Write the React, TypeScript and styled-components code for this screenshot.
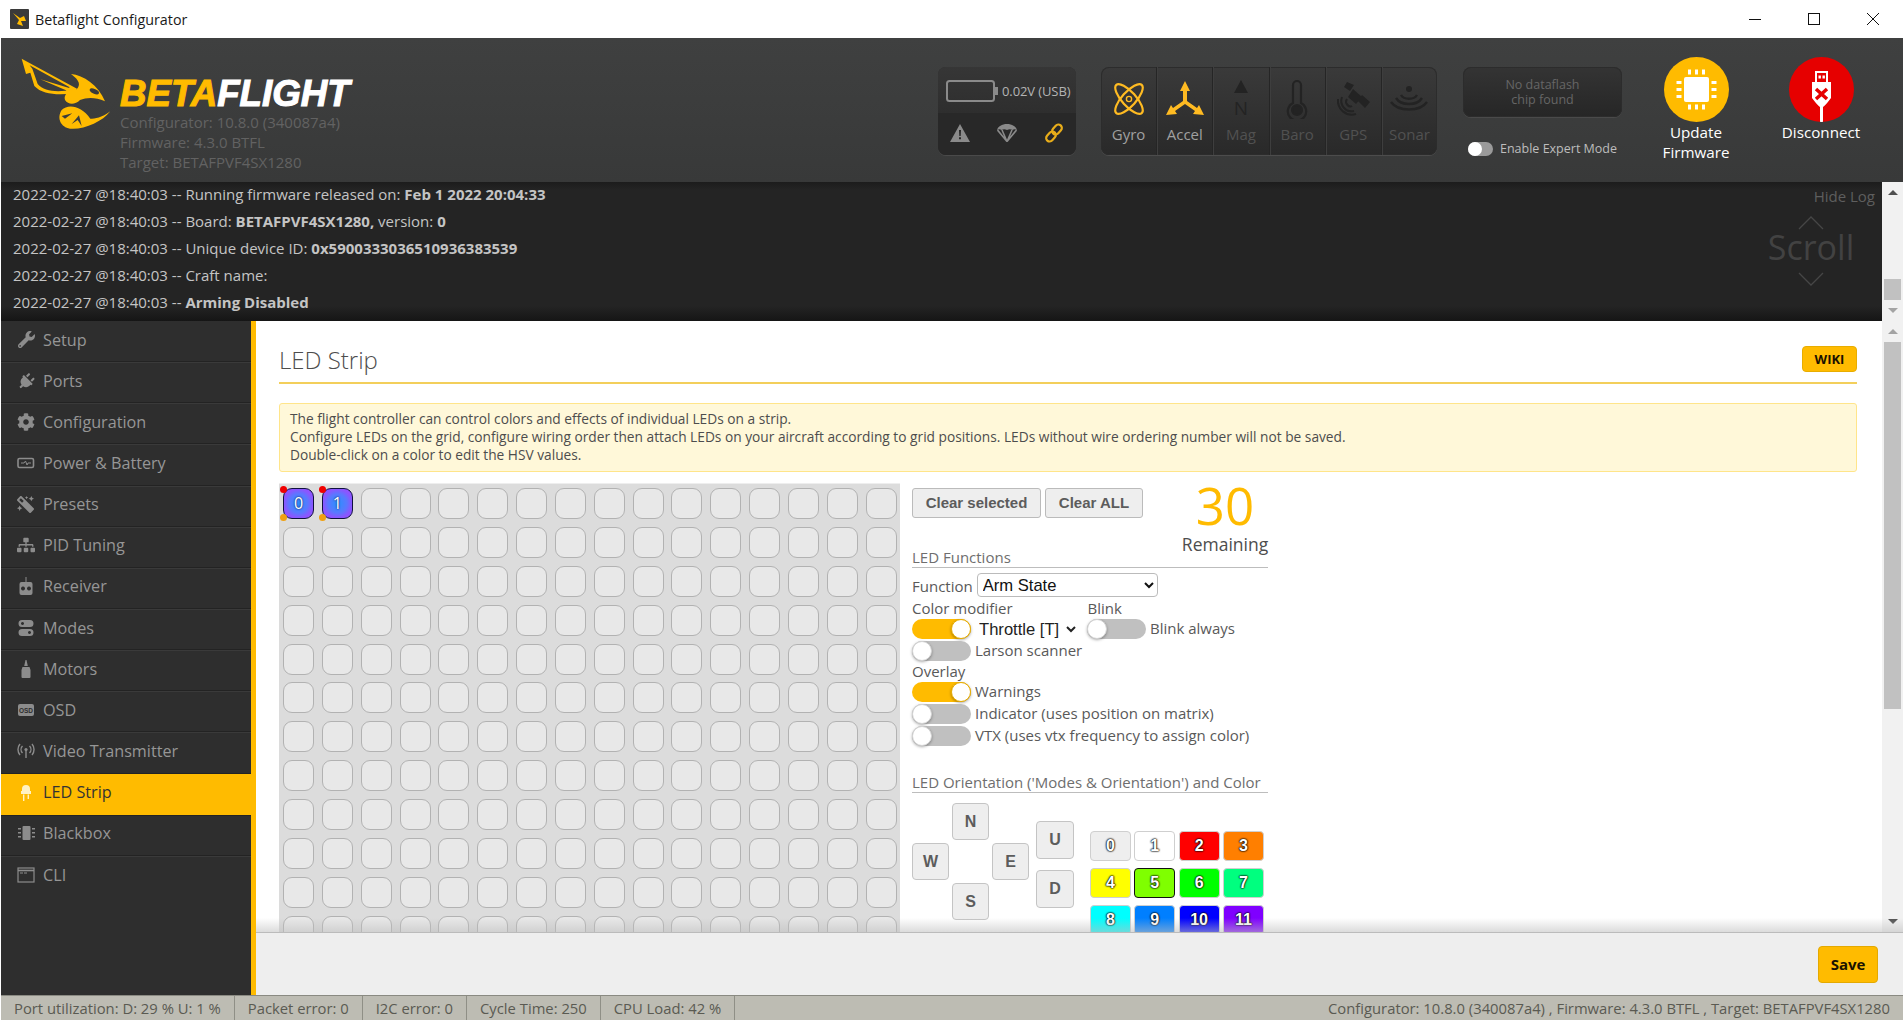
import React from "react";
import styled, { createGlobalStyle } from "styled-components";
import { FaWrench, FaPlug, FaCog, FaMagic, FaSitemap } from "react-icons/fa";

const Global = createGlobalStyle`
  html, body { margin: 0; padding: 0; background: #fff; overflow: hidden; }
  * { box-sizing: border-box; }
  body { font-family: "Open Sans", "Liberation Sans", sans-serif; }
`;

const Page = styled.div`
  width: 1903px; height: 1021px; display: flex; flex-direction: column;
  padding-bottom: 1px; background: #fff; overflow: hidden;
`;

/* ---------- window title bar ---------- */
const TitleBar = styled.div`
  height: 38px; display: flex; align-items: center; padding-left: 10px; background: #fff; flex: none;
`;
const AppIcon = styled.svg`width: 19px; height: 20px; margin-right: 6px; flex: none;`;
const AppTitle = styled.div`font-size: 14.3px; color: #1a1a1a; flex: 1; padding-top: 1px;`;
const WinButtons = styled.div`display: flex; align-items: center; padding-right: 24px; gap: 47px;`;
const WinIcon = styled.svg`width: 12px; height: 12px; display: block;`;

/* ---------- header ---------- */
const Header = styled.header`
  height: 144px; flex: none; margin-left: 1px; display: flex; position: relative;
  background: linear-gradient(#3f4040, #383939);
`;
const LogoArea = styled.div`display: flex; padding: 12px 0 0 14px; width: 937px; flex: none;`;
const Bee = styled.svg`width: 110px; height: 85px; flex: none; margin-right: -5px;`;
const Brand = styled.div`padding-top: 26px;`;
const BrandName = styled.div`
  font: italic 700 36.7px/36px "Liberation Sans", sans-serif; color: #fff; height: 36px;
  -webkit-text-stroke: 1.1px currentColor; white-space: nowrap;
`;
const BrandAccent = styled.span`color: #ffbb00;`;
const VersionLine = styled.div`font-size: 15px; line-height: 20px; color: #626262; white-space: nowrap;`;
const BatteryBox = styled.div`
  width: 138px; height: 88px; margin-top: 29px; border-radius: 8px; flex: none; overflow: hidden;
  background: #383838; box-shadow: 0 1px 0 #4a4a4a, inset 0 0 0 1px #2e2e2e; display: flex; flex-direction: column;
`;
const BatteryTop = styled.div`
  height: 46px; display: flex; align-items: center; padding: 2px 0 0 8px; gap: 2px;
  background: linear-gradient(#363636, #2e2e2e);
`;
const BatteryText = styled.span`font-size: 13px; letter-spacing: -0.1px; color: #b4b4b4; white-space: nowrap; margin-left: 2px;`;
const BatteryBottom = styled.div`
  flex: 1; display: flex; align-items: center; justify-content: space-between; padding: 0 12px 2px 12px; background: #282828;
`;
const Sensors = styled.div`
  width: 336px; height: 88px; margin: 29px 0 0 25px; border-radius: 8px; display: flex; overflow: hidden; flex: none;
  background: linear-gradient(#3a3a3a, #292929); box-shadow: 0 1px 0 #4c4c4c, inset 0 0 0 1px #2c2c2c;
`;
const SensorCell = styled.div<{ $on?: boolean }>`
  flex: 1; display: flex; flex-direction: column; align-items: center; padding-top: 12px;
  color: ${p => (p.$on ? "#ffbb22" : "#232323")};
  border-right: 1px solid #252525; box-shadow: 1px 0 0 #3e3e3e;
  &:last-child { border-right: none; box-shadow: none; }
`;
const SensorIcon = styled.svg`width: 38px; height: 40px; display: block; flex: none;`;
const SensorLabel = styled.span<{ $on?: boolean }>`
  font-size: 15px; line-height: 20px; margin-top: 5px;
  color: ${p => (p.$on ? "#a0a0a0" : "#515151")};
`;
const FlashColumn = styled.div`
  width: 159px; margin: 29px 0 0 26px; flex: none; display: flex; flex-direction: column;
`;
const FlashBox = styled.div`
  height: 50px; border-radius: 8px; background: linear-gradient(#343434, #262626);
  box-shadow: 0 1px 0 #4a4a4a, inset 0 0 0 1px #2c2c2c; color: #666; font-size: 12.5px; line-height: 15px;
  display: flex; align-items: center; justify-content: center; text-align: center;
`;
const ExpertRow = styled.div`display: flex; align-items: center; margin-top: 23px; padding-left: 5px; gap: 7px;`;
const MiniToggle = styled.div`
  width: 25px; height: 14px; border-radius: 7px; background: #9a9a9a; display: flex;
`;
const MiniKnob = styled.div`width: 14px; height: 14px; border-radius: 50%; background: #fff;`;
const ExpertText = styled.span`font-size: 12.5px; color: #bdbdbd; white-space: nowrap;`;
const ActionButton = styled.div`
  width: 110px; display: flex; flex-direction: column; align-items: center; padding-top: 19px; flex: none;
  color: #fff; font-size: 15.2px; line-height: 20px; text-align: center;
`;
const ActionCircle = styled.div<{ $bg: string }>`
  width: 65px; height: 65px; border-radius: 50%; background: ${p => p.$bg};
  display: flex; align-items: center; justify-content: center; overflow: hidden;
`;
const ActionIcon = styled.svg`width: 65px; height: 65px; display: block;`;
const UpdateAction = styled(ActionButton)`margin-left: 19px;`;
const DisconnectAction = styled(ActionButton)`margin-left: 15px;`;

/* ---------- log ---------- */
const LogRow = styled.div`height: 139px; flex: none; display: flex; margin-left: 1px;`;
const LogPanel = styled.div`
  flex: 1; position: relative; padding-left: 12px; color: #c4c4c4; font-size: 15px;
  background: linear-gradient(#1c1c1c 0, #242424 8px, #242424 124px, #151515 139px);
`;
const LogLine = styled.div`height: 27px; line-height: 24px; white-space: nowrap; b { font-weight: 700; }`;
const HideLog = styled.div`position: absolute; top: 4px; right: 7px; font-size: 15px; color: #5e5e5e;`;
const ScrollHint = styled.div`
  position: absolute; top: 34px; right: 29px; width: 84px; display: flex; flex-direction: column; align-items: center;
`;
const ScrollWord = styled.div`color: #424242; font-size: 34px; line-height: 34px; font-weight: 400; margin-bottom: 8px;`;
const ChevronSvg = styled.svg`width: 26px; height: 14px; display: block;`;

/* ---------- scrollbars ---------- */
const ScrollTrack = styled.div`
  width: 21px; flex: none; background: #f1f1f1; display: flex; flex-direction: column; align-items: center;
`;
const ScrollArrowBox = styled.div`height: 21px; flex: none; display: flex; align-items: center; justify-content: center;`;
const ArrowUp = styled.div<{ $c: string }>`
  width: 0; height: 0; border-left: 5px solid transparent; border-right: 5px solid transparent;
  border-bottom: 5px solid ${p => p.$c};
`;
const ArrowDown = styled.div<{ $c: string }>`
  width: 0; height: 0; border-left: 5px solid transparent; border-right: 5px solid transparent;
  border-top: 5px solid ${p => p.$c};
`;
const ThumbWell = styled.div<{ $top: number }>`flex: 1; width: 100%; padding: ${p => p.$top}px 2px 0;`;
const Thumb = styled.div<{ $h: number; $c: string }>`height: ${p => p.$h}px; background: ${p => p.$c};`;

/* ---------- main ---------- */
const Main = styled.div`flex: 1; display: flex; min-height: 0; margin-left: 1px;`;
const Sidebar = styled.nav`
  width: 255px; flex: none; background: #2e2e2e; border-right: 5px solid #ffbb00;
`;
const NavItem = styled.div<{ $active?: boolean }>`
  height: 41.15px; display: flex; align-items: center; padding: 0 0 3px 16px; gap: 8px; font-size: 16.2px;
  color: ${p => (p.$active ? "#333" : "#969696")};
  background: ${p => (p.$active ? "#ffbb00" : "transparent")};
  border-bottom: 1px solid ${p => (p.$active ? "#ffbb00" : "#232323")};
  box-shadow: 0 1px 0 ${p => (p.$active ? "#232323" : "#3a3a3a")};
  &:last-child { border-bottom: none; box-shadow: none; }
`;
const NavIcon = styled.span<{ $flip?: boolean; $rot?: number; $c?: string }>`
  width: 18px; height: 18px; display: flex; align-items: center; justify-content: center; flex: none;
  color: ${p => p.$c || "#8c8c8c"};
  transform: scaleX(${p => (p.$flip ? -1 : 1)}) rotate(${p => p.$rot || 0}deg);
  svg { display: block; }
`;

const ContentColumn = styled.div`flex: 1; min-width: 0; display: flex; flex-direction: column;`;
const ScrollRow = styled.div`flex: 1; min-height: 0; display: flex; position: relative;`;
const BottomFade = styled.div`
  position: absolute; left: 0; right: 0; bottom: 0; height: 14px; pointer-events: none;
  background: linear-gradient(rgba(200,200,200,0), rgba(190,190,190,.55));
`;
const ScrollArea = styled.div`flex: 1; min-width: 0; overflow: hidden; padding: 0 25px 0 23px;`;
const TitleRow = styled.div`
  height: 63px; display: flex; justify-content: space-between; border-bottom: 2px solid #f3cf5b; padding-top: 24px;
`;
const PageTitle = styled.h1`margin: 0; font-size: 24px; line-height: 30px; font-weight: 300; color: #4d4d4d;`;
const WikiButton = styled.div`
  width: 55px; height: 26px; border-radius: 4px; background: #ffbb00; border: 1px solid #e8ad00; color: #1a1000;
  font-size: 13px; font-weight: 700; display: flex; align-items: center; justify-content: center; margin-top: 1px;
`;
const Note = styled.div`
  margin-top: 19px; height: 69px; border: 1px solid #ffe58a; border-radius: 3px; background: #fff8d9;
  padding: 6px 10px; font-size: 13.72px; line-height: 18px; color: #4d4d4d; white-space: nowrap;
`;
const Workspace = styled.div`display: flex; margin-top: 11px; gap: 12px; align-items: flex-start;`;
const LedGrid = styled.div`
  width: 621px; flex: none; background: #dcdcdc; border-top: 1px solid #eee; padding: 4px 0 0 4px;
  display: grid; grid-template-columns: repeat(16, 31px); column-gap: 7.85px; row-gap: 7.9px;
`;
const LedCell = styled.div<{ $active?: boolean }>`
  width: 31px; height: 31px; border-radius: 9px; position: relative;
  border: 1px solid ${p => (p.$active ? "#101040" : "#b2b2b2")};
  background: ${p => (p.$active ? "radial-gradient(circle closest-side, #2a90ff 0, #5a78ff 65%, #8c55ff 100%)" : "#e8e8e8")};
  color: #fff; font-size: 16px; text-align: center; line-height: 28px; text-shadow: 0 0 2px #003;
`;
const LedDot = styled.span<{ $c: string; $bottom?: boolean }>`
  position: absolute; left: -4px; width: 7px; height: 7px; border-radius: 50%; background: ${p => p.$c};
  ${p => (p.$bottom ? "bottom: -3px;" : "top: -3px;")}
`;

const Controls = styled.div`width: 356px; flex: none; padding-top: 5px; color: #595959; font-size: 15px;`;
const TopRow = styled.div`height: 64px; display: flex; justify-content: space-between; align-items: flex-start;`;
const ButtonPair = styled.div`display: flex; gap: 4px;`;
const ClearButton = styled.div<{ $w: number }>`
  width: ${p => p.$w}px; height: 30px; border: 1px solid #bbb; border-radius: 3px; background: #eee;
  font: 700 15px/28px "Liberation Sans", sans-serif; color: #5c5c5c; text-align: center;
`;
const RemainingBox = styled.div`width: 86px; margin-top: -8px; display: flex; flex-direction: column; align-items: center;`;
const RemainingNum = styled.div`font-size: 51px; line-height: 50px; font-weight: 400; color: #ffbb00;`;
const RemainingText = styled.div`font-size: 17.5px; line-height: 22px; margin-top: 3px; color: #4d4d4d; white-space: nowrap;`;
const SectionTitle = styled.div<{ $mt?: number; $h: number; $lh: number }>`
  height: ${p => p.$h}px; margin-top: ${p => p.$mt || 0}px; border-bottom: 1px solid #bdbdbd; color: #6e6e6e;
  font-size: 15px; line-height: ${p => p.$lh}px; white-space: nowrap;
`;
const FunctionRow = styled.div`display: flex; align-items: center; gap: 4px; margin-top: 6px; height: 24px;`;
const FunctionLabel = styled.span`line-height: 20px;`;
const FunctionSelect = styled.select`
  width: 181px; height: 24px; border: 1px solid #bbb; border-radius: 4px; background: #fff; padding-left: 1px;
  margin-top: -2px; font: 16.6px "Liberation Sans", sans-serif; color: #111; outline: none;
`;
const ModifierSelect = styled.select`
  width: 104px; height: 20px; border: none; background: #fff; margin: 0 4px 0 0; padding: 0;
  font: 16.6px "Liberation Sans", sans-serif; color: #222; outline: none;
`;
const LabelRow = styled.div`display: flex; height: 18px; line-height: 16px; margin-top: 2px;`;
const BlinkLabel = styled.span`margin-left: 75px;`;
const SwitchRow = styled.div`display: flex; align-items: flex-start; height: 20px; margin-top: 2px; gap: 4px; line-height: 18px; white-space: nowrap;`;
const FirstSwitchRow = styled(SwitchRow)`margin-top: 1px;`;
const Switch = styled.div<{ $on?: boolean }>`
  width: 59px; height: 20px; border-radius: 10px; flex: none; display: flex;
  justify-content: ${p => (p.$on ? "flex-end" : "flex-start")};
  background: ${p => (p.$on ? "#ffbb00" : "#c0c0c0")};
`;
const Knob = styled.div<{ $on?: boolean }>`
  width: 20px; height: 20px; border-radius: 50%; background: #fff;
  border: 1px solid ${p => (p.$on ? "#e8ad00" : "#d4d4d4")};
  box-shadow: 0 1px 3px rgba(0,0,0,.35);
`;
const Orientation = styled.div`display: flex; align-items: flex-start; padding-top: 10px;`;
const DirPad = styled.div`
  display: grid; grid-template-columns: repeat(3, 37px); grid-template-rows: repeat(3, 37px); gap: 3px; flex: none;
`;
const DirButton = styled.div<{ $col?: number; $row?: number }>`
  grid-column: ${p => p.$col || "auto"}; grid-row: ${p => p.$row || "auto"};
  background: #eee; border: 1px solid #c4c4c4; border-radius: 4px; color: #5c5c5c;
  font: 700 16px "Liberation Sans", sans-serif; display: flex; align-items: center; justify-content: center;
`;
const UpDown = styled.div`
  display: flex; flex-direction: column; gap: 11px; margin: 18px 0 0 7px; flex: none;
`;
const UpDownButton = styled(DirButton)`width: 38px; height: 38px;`;
const Palette = styled.div`
  display: grid; grid-template-columns: repeat(4, 41px); grid-auto-rows: 29.5px; column-gap: 3.3px; row-gap: 7.5px;
  margin: 28px 0 0 16px; flex: none;
`;
const Swatch = styled.div<{ $bg: string; $sel?: boolean }>`
  background: ${p => p.$bg}; border: 1px solid ${p => (p.$sel ? "#111" : "#cfcfcf")}; border-radius: 4px;
  color: #fff; font: 700 16px "Liberation Sans", sans-serif; display: flex; align-items: center; justify-content: center;
  text-shadow: 0 0 2px #000, 0 0 2px #000, 0 0 1px #000;
`;

const Footer = styled.div`
  height: 63px; flex: none; background: #eee; border-top: 1px solid #bbb;
  display: flex; justify-content: flex-end; align-items: center; padding-right: 25px;
`;
const SaveButton = styled.div`
  width: 60px; height: 37px; border-radius: 4px; background: #ffbb00; border: 1px solid #e4a900;
  font-size: 15px; font-weight: 700; color: #1a1200; display: flex; align-items: center; justify-content: center;
`;

/* ---------- status bar ---------- */
const StatusBar = styled.footer`
  height: 25px; flex: none; margin-left: 1px; display: flex; align-items: center; background: #bdbcb3;
  border-top: 1px solid #8a8a82; color: #5a5a52; font-size: 14.8px; white-space: nowrap;
`;
const StatusItem = styled.div`height: 100%; display: flex; align-items: center; padding: 0 13px; border-right: 1px solid #8f8f86;`;
const StatusRight = styled.div`margin-left: auto; padding-right: 13px;`;

/* ---------- drawings ---------- */
const BeeMark = () => (
  <Bee viewBox="0 0 330 255" fill="#ffbb00">
    <path fillRule="evenodd" d="M20 26 L186 116 L176 130 C130 136 82 134 58 108 L46 68 L33 72 Z M44 46 L164 112 L152 122 C118 126 84 122 68 102 L52 56 Z" />
    <path d="M76 88 L170 116 L160 124 Z" />
    <path d="M168 72 C205 76 250 104 270 154 C240 140 215 142 195 150 C180 165 160 165 150 150 C145 135 160 120 185 118 C197 105 195 92 168 72Z" />
    <ellipse cx="238" cy="124" rx="15" ry="7" transform="rotate(25 238 124)" fill="#3a3b3b" />
    <path fillRule="evenodd" d="M286 184 C262 216 205 240 165 236 C138 232 124 205 140 180 C160 160 200 168 226 206 C244 208 268 198 286 184Z M140 198 L172 190 L150 206 Z M170 222 L192 196 L200 228 L188 210 Z" />
  </Bee>
);

const Chevron = ({ up }: { up?: boolean }) => (
  <ChevronSvg viewBox="0 0 26 14" fill="none" stroke="#464646" strokeWidth="1.3">
    <path d={up ? "M1 13 L13 1 L25 13" : "M1 1 L13 13 L25 1"} />
  </ChevronSvg>
);

const GyroIcon = () => (
  <SensorIcon viewBox="0 0 38 40" fill="none" stroke="currentColor" strokeWidth="2.2">
    <ellipse cx="19" cy="20" rx="7" ry="19" transform="rotate(-42 19 20)" />
    <ellipse cx="19" cy="20" rx="7" ry="19" transform="rotate(42 19 20)" />
    <circle cx="19" cy="20" r="2.6" strokeWidth="1.4" />
  </SensorIcon>
);
const AccelIcon = () => (
  <SensorIcon viewBox="0 0 38 40" fill="currentColor">
    <path d="M19 2 L24 12 L21 12 L21 22 L31 29 L33 26 L38 36 L27 35 L29 32 L19 25 L9 32 L11 35 L0 36 L5 26 L7 29 L17 22 L17 12 L14 12 Z" />
  </SensorIcon>
);
const MagIcon = () => (
  <SensorIcon viewBox="0 0 38 40" fill="currentColor">
    <path d="M19 1 L26 14 L12 14 Z" />
    <text x="19" y="36" textAnchor="middle" fontFamily="Open Sans" fontSize="19">N</text>
  </SensorIcon>
);
const BaroIcon = () => (
  <SensorIcon viewBox="0 0 38 40" fill="none" stroke="currentColor" strokeWidth="2.2">
    <path d="M15 24 V6 a4 4 0 0 1 8 0 V24 a9.2 9.2 0 1 1 -8 0Z" />
    <circle cx="19" cy="31" r="5" fill="currentColor" />
  </SensorIcon>
);
const GpsIcon = () => (
  <SensorIcon viewBox="0 0 38 40" fill="currentColor">
    <path d="M13 3 L20 6 L16 12 L10 8Z M28 16 L36 23 L31 29 L24 22Z M19 10 L28 18 L22 25 L14 18Z" />
    <path d="M8 18 C5 26 12 34 20 32 M4 20 C3 30 12 38 22 35 M13 20 C10 24 15 29 18 27" fill="none" stroke="currentColor" strokeWidth="2" />
  </SensorIcon>
);
const SonarIcon = () => (
  <SensorIcon viewBox="0 0 38 40" fill="none" stroke="currentColor" strokeWidth="2.4">
    <circle cx="19" cy="10" r="3" fill="currentColor" stroke="none" />
    <path d="M11 16 C14 21 24 21 27 16 M6 19 C11 27 27 27 32 19 M1 23 C8 33 30 33 37 23" />
  </SensorIcon>
);

const NavSvg = styled.svg`width: 18px; height: 18px;`;
const PowerIcon = () => (
  <NavSvg viewBox="0 0 18 18" fill="none" stroke="currentColor" strokeWidth="1.6">
    <rect x="1" y="4.5" width="15.5" height="9" rx="1.5" />
    <path d="M4 9 H7 L8.5 7 L10 11 L11 9 H14" strokeWidth="1" />
  </NavSvg>
);
const ReceiverIcon = () => (
  <NavSvg viewBox="0 0 18 18" fill="currentColor">
    <path fillRule="evenodd" d="M8.5 0 h1 v5 h4 a2 2 0 0 1 2 2 v9 a2 2 0 0 1 -2 2 h-9 a2 2 0 0 1 -2 -2 v-9 a2 2 0 0 1 2 -2 h4Z M6 9.5 a2 2 0 1 0 .01 0Z M12 9.5 a2 2 0 1 0 .01 0Z" />
  </NavSvg>
);
const ModesIcon = () => (
  <NavSvg viewBox="0 0 18 18" fill="currentColor">
    <path fillRule="evenodd" d="M5 1 h8 a3.5 3.5 0 0 1 0 7 h-8 a3.5 3.5 0 0 1 0 -7Z M5.5 3 a1.5 1.5 0 1 0 .01 0Z" />
    <path fillRule="evenodd" d="M5 10 h8 a3.5 3.5 0 0 1 0 7 h-8 a3.5 3.5 0 0 1 0 -7Z M12.5 12 a1.5 1.5 0 1 0 .01 0Z" />
  </NavSvg>
);
const MotorIcon = () => (
  <NavSvg viewBox="0 0 18 18" fill="currentColor">
    <path d="M8.5 0 h1 l1.3 6 h-3.6Z M5.5 7 h7 l1 3 v7 a1 1 0 0 1 -1 1 h-7 a1 1 0 0 1 -1 -1 v-7Z" />
  </NavSvg>
);
const OsdIcon = () => (
  <NavSvg viewBox="0 0 18 18">
    <rect x="1" y="3" width="16" height="12" rx="2" fill="currentColor" />
    <text x="9" y="11.6" textAnchor="middle" fontFamily="Liberation Sans" fontWeight="700" fontSize="6.5" fill="#2e2e2e">OSD</text>
  </NavSvg>
);
const VtxIcon = () => (
  <NavSvg viewBox="0 0 18 18" fill="none" stroke="currentColor" strokeWidth="1.4">
    <circle cx="9" cy="7.5" r="1.6" fill="currentColor" stroke="none" />
    <path d="M9 8 V16 M5.5 4 a5 5 0 0 0 0 7 M12.5 4 a5 5 0 0 1 0 7 M3 2 a8.5 8.5 0 0 0 0 11 M15 2 a8.5 8.5 0 0 1 0 11" />
  </NavSvg>
);
const LedIcon = () => (
  <NavSvg viewBox="0 0 18 18" fill="#fff2c4">
    <path d="M5 8 V6 a4 4 0 0 1 8 0 V8 h1 v3 H4 V8Z M6 11.5 h1.4 V18 H6Z M10.6 11.5 H12 V16 h-1.4Z" />
  </NavSvg>
);
const BlackboxIcon = () => (
  <NavSvg viewBox="0 0 18 18" fill="currentColor">
    <rect x="5.5" y="2" width="8" height="14" rx="1" />
    <path d="M1 4h3v1.6H1Z M1 8h3v1.6H1Z M1 12h3v1.6H1Z M15 4h3v1.6h-3Z M15 8h3v1.6h-3Z M15 12h3v1.6h-3Z" />
  </NavSvg>
);
const CliIcon = () => (
  <NavSvg viewBox="0 0 18 18" fill="none" stroke="currentColor" strokeWidth="1.2">
    <rect x="1" y="2" width="16" height="14" />
    <path d="M1 4.5 H17" strokeWidth="1.6" />
    <path d="M3 7 h3 M7 7 h3" strokeWidth="1" />
  </NavSvg>
);

const NAV: { label: string; icon: React.ReactNode; flip?: boolean; rot?: number; active?: boolean }[] = [
  { label: "Setup", icon: <FaWrench size={17} /> },
  { label: "Ports", icon: <FaPlug size={17} />, rot: 45 },
  { label: "Configuration", icon: <FaCog size={18} /> },
  { label: "Power & Battery", icon: <PowerIcon /> },
  { label: "Presets", icon: <FaMagic size={17} />, flip: true },
  { label: "PID Tuning", icon: <FaSitemap size={18} /> },
  { label: "Receiver", icon: <ReceiverIcon /> },
  { label: "Modes", icon: <ModesIcon /> },
  { label: "Motors", icon: <MotorIcon /> },
  { label: "OSD", icon: <OsdIcon /> },
  { label: "Video Transmitter", icon: <VtxIcon /> },
  { label: "LED Strip", icon: <LedIcon />, active: true },
  { label: "Blackbox", icon: <BlackboxIcon /> },
  { label: "CLI", icon: <CliIcon /> },
];

const SWATCHES = ["#eeeeee", "#ffffff", "#ff0000", "#ff7f00", "#ffff00", "#7fff00", "#00ff00", "#00ff7f", "#00ffff", "#007fff", "#0000ff", "#7f00ff", "#ff00ff", "#ff007f", "#ff0000", "#ffffff"];

const LOG: React.ReactNode[] = [
  <>Running firmware released on: <b>Feb 1 2022 20:04:33</b></>,
  <>Board: <b>BETAFPVF4SX1280,</b> version: <b>0</b></>,
  <>Unique device ID: <b>0x5900333036510936383539</b></>,
  <>Craft name:</>,
  <><b>Arming Disabled</b></>,
];

export default function App() {
  return (
    <Page>
      <Global />
      <TitleBar>
        <AppIcon viewBox="0 0 19 20">
          <rect width="19" height="20" rx="1" fill="#3a3a3a" />
          <path d="M3 4 L10 9 L14 7 L16 12 L11 12 L13 17 L7 15 L9 11Z" fill="#ffbb00" />
        </AppIcon>
        <AppTitle>Betaflight Configurator</AppTitle>
        <WinButtons>
          <WinIcon viewBox="0 0 12 12" stroke="#111" fill="none"><path d="M0 6.5 H12" /></WinIcon>
          <WinIcon viewBox="0 0 12 12" stroke="#111" fill="none"><rect x=".5" y=".5" width="11" height="11" /></WinIcon>
          <WinIcon viewBox="0 0 12 12" stroke="#111" fill="none"><path d="M0 0 L12 12 M12 0 L0 12" /></WinIcon>
        </WinButtons>
      </TitleBar>

      <Header>
        <LogoArea>
          <BeeMark />
          <Brand>
            <BrandName><BrandAccent>BETA</BrandAccent>FLIGHT</BrandName>
            <VersionLine>Configurator: 10.8.0 (340087a4)</VersionLine>
            <VersionLine>Firmware: 4.3.0 BTFL</VersionLine>
            <VersionLine>Target: BETAFPVF4SX1280</VersionLine>
          </Brand>
        </LogoArea>
        <BatteryBox>
          <BatteryTop>
            <svg width="52" height="22" viewBox="0 0 52 22" fill="none">
              <rect x="1" y="1" width="47" height="20" rx="2.5" stroke="#8a8a8a" strokeWidth="2" />
              <rect x="49" y="7" width="3" height="8" fill="#8a8a8a" />
            </svg>
            <BatteryText>0.02V (USB)</BatteryText>
          </BatteryTop>
          <BatteryBottom>
            <svg width="20" height="18" viewBox="0 0 20 18"><path fillRule="evenodd" fill="#8a8a8a" d="M10 0 L20 18 H0Z M9 6 h2 l-.3 6 h-1.4Z M9 13.2 h2 v2 h-2Z" /></svg>
            <svg width="20" height="18" viewBox="0 0 20 18" fill="none" stroke="#8a8a8a"><path fill="#8a8a8a" stroke="none" d="M10 0 C15 0 19 2.5 20 6 C18 5 17 5 15.5 6 C13.5 5 12 5 10 6 C8 5 6.5 5 4.5 6 C3 5 2 5 0 6 C1 2.5 5 0 10 0Z" /><path d="M0.5 6 L10 17.5 L19.5 6 M5 6 L10 17.5 L15 6" strokeWidth="1.6" /></svg>
            <svg width="20" height="20" viewBox="0 0 20 20" fill="none" stroke="#e8ad1a" strokeWidth="2.2">
              <rect x="9.5" y="1" width="7" height="11" rx="3.5" transform="rotate(42 13 6.5)" />
              <rect x="3.5" y="8" width="7" height="11" rx="3.5" transform="rotate(42 7 13.5)" />
            </svg>
          </BatteryBottom>
        </BatteryBox>
        <Sensors>
          <SensorCell $on><GyroIcon /><SensorLabel $on>Gyro</SensorLabel></SensorCell>
          <SensorCell $on><AccelIcon /><SensorLabel $on>Accel</SensorLabel></SensorCell>
          <SensorCell><MagIcon /><SensorLabel>Mag</SensorLabel></SensorCell>
          <SensorCell><BaroIcon /><SensorLabel>Baro</SensorLabel></SensorCell>
          <SensorCell><GpsIcon /><SensorLabel>GPS</SensorLabel></SensorCell>
          <SensorCell><SonarIcon /><SensorLabel>Sonar</SensorLabel></SensorCell>
        </Sensors>
        <FlashColumn>
          <FlashBox>No dataflash<br />chip found</FlashBox>
          <ExpertRow>
            <MiniToggle><MiniKnob /></MiniToggle>
            <ExpertText>Enable Expert Mode</ExpertText>
          </ExpertRow>
        </FlashColumn>
        <UpdateAction>
          <ActionCircle $bg="#ffbb00">
            <ActionIcon viewBox="0 0 65 65" fill="#fff">
              <rect x="20" y="20" width="25" height="25" rx="2" />
              <path d="M24 12.5 h3 v5 h-3Z M31 12.5 h3 v5 h-3Z M38 12.5 h3 v5 h-3Z M24 47.5 h3 v5 h-3Z M31 47.5 h3 v5 h-3Z M38 47.5 h3 v5 h-3Z M12.5 24 h5 v3 h-5Z M12.5 31 h5 v3 h-5Z M12.5 38 h5 v3 h-5Z M47.5 24 h5 v3 h-5Z M47.5 31 h5 v3 h-5Z M47.5 38 h5 v3 h-5Z" />
            </ActionIcon>
          </ActionCircle>
          Update<br />Firmware
        </UpdateAction>
        <DisconnectAction>
          <ActionCircle $bg="#e60000">
            <ActionIcon viewBox="0 0 65 65">
              <path fill="#fff" d="M26 14 h13 v11 h3 v16 q-6 8 -8 9 V65 h-3 V50 q-2 -1 -8 -9 V25 h3Z" />
              <path fill="#e60000" d="M28 16 h9 v9 h-9Z" />
              <path fill="#fff" d="M29.5 18.5 h2.4 v3 h-2.4Z M33.5 18.5 h2.4 v3 h-2.4Z" />
              <path stroke="#e60000" strokeWidth="3.5" d="M27 32 L38 42 M38 32 L27 42" />
            </ActionIcon>
          </ActionCircle>
          Disconnect
        </DisconnectAction>
      </Header>

      <LogRow>
        <LogPanel>
          {LOG.map((l, i) => (
            <LogLine key={i}>2022-02-27 @18:40:03 -- {l}</LogLine>
          ))}
          <HideLog>Hide Log</HideLog>
          <ScrollHint>
            <Chevron up />
            <ScrollWord>Scroll</ScrollWord>
            <Chevron />
          </ScrollHint>
        </LogPanel>
        <ScrollTrack>
          <ScrollArrowBox><ArrowUp $c="#505050" /></ScrollArrowBox>
          <ThumbWell $top={76}><Thumb $h={21} $c="#c1c1c1" /></ThumbWell>
          <ScrollArrowBox><ArrowDown $c="#a3a3a3" /></ScrollArrowBox>
        </ScrollTrack>
      </LogRow>

      <Main>
        <Sidebar>
          {NAV.map(n => (
            <NavItem key={n.label} $active={n.active}>
              <NavIcon $flip={n.flip} $rot={n.rot}>{n.icon}</NavIcon>
              {n.label}
            </NavItem>
          ))}
        </Sidebar>
        <ContentColumn>
          <ScrollRow>
            <ScrollArea>
              <TitleRow>
                <PageTitle>LED Strip</PageTitle>
                <WikiButton>WIKI</WikiButton>
              </TitleRow>
              <Note>
                The flight controller can control colors and effects of individual LEDs on a strip.<br />
                Configure LEDs on the grid, configure wiring order then attach LEDs on your aircraft according to grid positions. LEDs without wire ordering number will not be saved.<br />
                Double-click on a color to edit the HSV values.
              </Note>
              <Workspace>
                <LedGrid>
                  {Array.from({ length: 16 * 16 }, (_, i) =>
                    i < 2 ? (
                      <LedCell key={i} $active>
                        {i}
                        <LedDot $c="#f00000" />
                        <LedDot $c="#f0a010" $bottom />
                      </LedCell>
                    ) : (
                      <LedCell key={i} />
                    )
                  )}
                </LedGrid>
                <Controls>
                  <TopRow>
                    <ButtonPair>
                      <ClearButton $w={129}>Clear selected</ClearButton>
                      <ClearButton $w={98}>Clear ALL</ClearButton>
                    </ButtonPair>
                    <RemainingBox>
                      <RemainingNum>30</RemainingNum>
                      <RemainingText>Remaining</RemainingText>
                    </RemainingBox>
                  </TopRow>
                  <SectionTitle $h={16} $lh={10}>LED Functions</SectionTitle>
                  <FunctionRow>
                    <FunctionLabel>Function</FunctionLabel>
                    <FunctionSelect defaultValue="Arm State"><option>Arm State</option></FunctionSelect>
                  </FunctionRow>
                  <LabelRow>Color modifier<BlinkLabel>Blink</BlinkLabel></LabelRow>
                  <FirstSwitchRow>
                    <Switch $on><Knob $on /></Switch>
                    <ModifierSelect defaultValue="Throttle [T]"><option>Throttle [T]</option></ModifierSelect>
                    <Switch><Knob /></Switch>
                    Blink always
                  </FirstSwitchRow>
                  <SwitchRow><Switch><Knob /></Switch>Larson scanner</SwitchRow>
                  <LabelRow>Overlay</LabelRow>
                  <FirstSwitchRow><Switch $on><Knob $on /></Switch>Warnings</FirstSwitchRow>
                  <SwitchRow><Switch><Knob /></Switch>Indicator (uses position on matrix)</SwitchRow>
                  <SwitchRow><Switch><Knob /></Switch>VTX (uses vtx frequency to assign color)</SwitchRow>
                  <SectionTitle $h={22} $lh={22} $mt={25}>LED Orientation ('Modes &amp; Orientation') and Color</SectionTitle>
                  <Orientation>
                    <DirPad>
                      <DirButton $col={2} $row={1}>N</DirButton>
                      <DirButton $col={1} $row={2}>W</DirButton>
                      <DirButton $col={3} $row={2}>E</DirButton>
                      <DirButton $col={2} $row={3}>S</DirButton>
                    </DirPad>
                    <UpDown>
                      <UpDownButton>U</UpDownButton>
                      <UpDownButton>D</UpDownButton>
                    </UpDown>
                    <Palette>
                      {SWATCHES.map((c, i) => (
                        <Swatch key={i} $bg={c} $sel={i === 5}>{i}</Swatch>
                      ))}
                    </Palette>
                  </Orientation>
                </Controls>
              </Workspace>
            </ScrollArea>
            <ScrollTrack>
              <ScrollArrowBox><ArrowUp $c="#a3a3a3" /></ScrollArrowBox>
              <ThumbWell $top={0}><Thumb $h={367} $c="#c1c1c1" /></ThumbWell>
              <ScrollArrowBox><ArrowDown $c="#505050" /></ScrollArrowBox>
            </ScrollTrack>
            <BottomFade />
          </ScrollRow>
          <Footer><SaveButton>Save</SaveButton></Footer>
        </ContentColumn>
      </Main>

      <StatusBar>
        <StatusItem>Port utilization: D: 29 % U: 1 %</StatusItem>
        <StatusItem>Packet error: 0</StatusItem>
        <StatusItem>I2C error: 0</StatusItem>
        <StatusItem>Cycle Time: 250</StatusItem>
        <StatusItem>CPU Load: 42 %</StatusItem>
        <StatusRight>Configurator: 10.8.0 (340087a4) , Firmware: 4.3.0 BTFL , Target: BETAFPVF4SX1280</StatusRight>
      </StatusBar>
    </Page>
  );
}
